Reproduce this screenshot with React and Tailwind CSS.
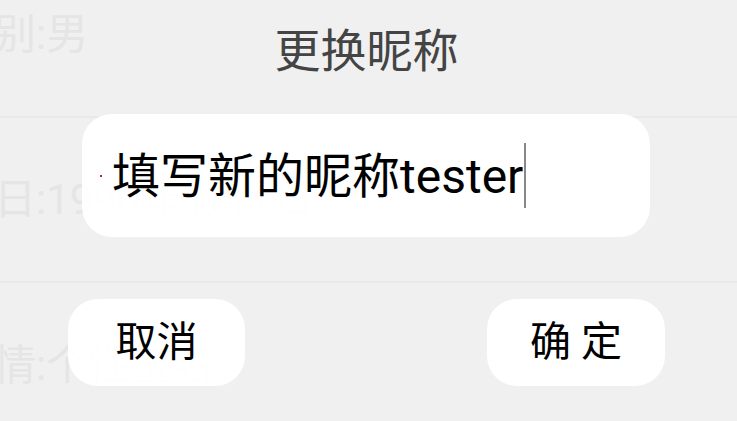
import React from 'react';

const font = { fontFamily: "Roboto, 'Noto Sans CJK SC', sans-serif" };

const BgRow = ({ text, last }) => (
  <div className={`h-[165px] flex items-center ${last ? '' : 'border-b-2 border-[#e9e9e9]'}`}>
    <span className="text-[42px] leading-none text-[#e5e5e5] -ml-[48px] whitespace-nowrap">{text}</span>
  </div>
);

const App = () => {
  return (
    <div className="relative w-[737px] h-[421px] overflow-hidden bg-[#f0f0f0]" style={font}>
      {/* page behind the dialog */}
      <div className="-mt-[47px] flex flex-col">
        <BgRow text="性别:男" />
        <BgRow text="生日:1990年1月1日" />
        <BgRow text="心情:个性签名" last />
      </div>

      {/* dialog */}
      <div className="absolute inset-0 flex flex-col">
        <div className="mt-[26px] h-[50px] flex items-center justify-center pr-[4px] text-[46px] leading-none text-[#444444]">
          更换昵称
        </div>
        <div className="mt-[38px] ml-[82px] w-[568px] h-[123px] rounded-[30px] bg-white/[0.96] flex items-center pl-[18px]">
          <span className="w-[2px] h-[2px] bg-[#b03020] mr-[10px]"></span>
          <span className="pt-[3px] text-[48px] leading-none text-black whitespace-nowrap">填写新的昵称tester</span>
          <span className="w-[2px] h-[65px] bg-[#888888] ml-[1px]"></span>
        </div>
        <div className="mt-[62px] flex justify-between pl-[68px] pr-[72px]">
          <button className="w-[177px] h-[87px] rounded-[30px] bg-white/[0.96] text-[41px] leading-none text-black">
            取消
          </button>
          <button className="w-[178px] h-[87px] rounded-[30px] bg-white/[0.96] text-[41px] leading-none text-black">
            确 定
          </button>
        </div>
      </div>
    </div>
  );
};

export default App;
